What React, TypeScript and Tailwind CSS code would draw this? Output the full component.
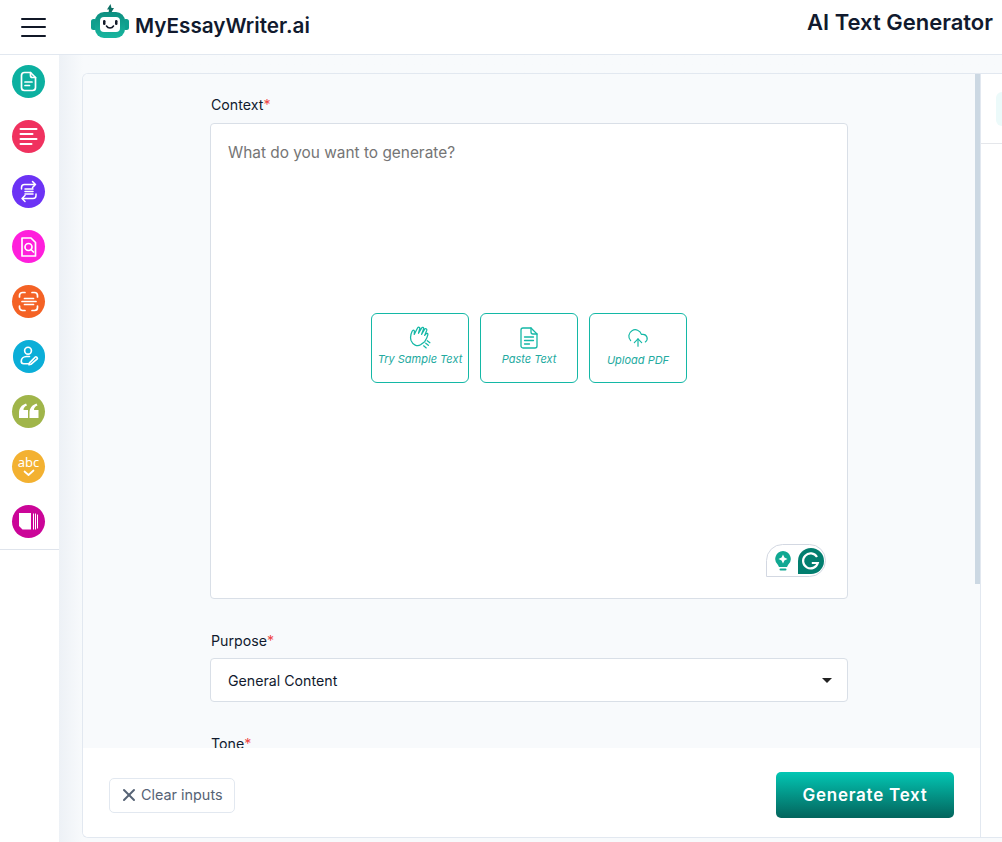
import { CloudUpload, X } from "lucide-react";

const stroke = { fill: "none", stroke: "#fff", strokeWidth: 1.7, strokeLinecap: "round" as const, strokeLinejoin: "round" as const };

function NavIcon({ bg, children, size = "w-[33px]" }: { bg: string; children: React.ReactNode; size?: string }) {
  return (
    <div className={`${bg} ${size} h-[33px] rounded-full flex items-center justify-center shrink-0`}>
      <svg width="33" height="33" viewBox="0 0 33 33">
        {children}
      </svg>
    </div>
  );
}

function Logo() {
  return (
    <svg width="38" height="34" viewBox="0 0 38 34">
      <defs>
        <linearGradient id="logoBody" x1="0" y1="0" x2="0" y2="1">
          <stop offset="0" stopColor="#0c8f80" />
          <stop offset="1" stopColor="#18b69f" />
        </linearGradient>
      </defs>
      <path d="M19.500 0l-3.500 5.500h2l-.5 3.500h2.500l3-5h-2.500z" fill="#0d6f64" />
      <rect x="0" y="15" width="6" height="11" rx="2.500" fill="#0f9f8e" />
      <rect x="32" y="15" width="6" height="11" rx="2.500" fill="#0f9f8e" />
      <rect x="4" y="8" width="30" height="26" rx="9" fill="url(#logoBody)" />
      <rect x="9" y="13" width="20" height="15" rx="4" fill="#fff" />
      <rect x="12" y="16" width="2.500" height="5" rx="1.200" fill="#111827" />
      <rect x="24" y="16" width="2.500" height="5" rx="1.200" fill="#111827" />
      <path d="M15.500 22c1.500 2.500 5.500 2.500 7 0" fill="none" stroke="#111827" strokeWidth="1.500" strokeLinecap="round" />
    </svg>
  );
}

function Action({ label, icon, textClass }: { label: string; icon: React.ReactNode; textClass: string }) {
  return (
    <button className="w-[98px] h-[70px] rounded-[6px] border border-[#14b8a6] flex flex-col items-center pt-[12px] bg-white">
      <span className="h-[23px] flex items-center">{icon}</span>
      <span className={`${textClass} text-[11px] leading-[16px] italic text-[#23aaa0] whitespace-nowrap`}>{label}</span>
    </button>
  );
}

export default function App() {
  return (
    <div className="w-[1002px] h-[842px] overflow-hidden flex flex-col bg-white font-['Inter',sans-serif] text-[#111a2e]">
      <header className="h-[55px] shrink-0 border-b border-[#e2e8f0] flex items-center bg-white">
        <div className="w-[67px] shrink-0 flex justify-center">
          <div className="w-[25px] flex flex-col gap-[6.5px]">
            <div className="h-[2px] bg-[#111827] rounded" />
            <div className="h-[2px] bg-[#111827] rounded" />
            <div className="h-[2px] bg-[#111827] rounded" />
          </div>
        </div>
        <div className="ml-[24px] flex items-center gap-[6px] mt-[-12px]">
          <Logo />
          <span className="text-[20.7px] leading-[28px] font-semibold mt-[10px]">MyEssayWriter.ai</span>
        </div>
        <h1 className="ml-auto mr-[9px] text-[22px] font-semibold mt-[-10px]">AI Text Generator</h1>
      </header>

      <div className="flex-1 flex min-h-0">
        <aside className="w-[59px] shrink-0 bg-white">
          <div className="h-[495px] border-b border-[#dfe4ec] pt-[10px] flex flex-col items-center gap-[22px] pr-[2px]">
            <NavIcon bg="bg-[#0cb0a0]">
              <path d="M9.500 10.500a3 3 0 013-3h6l5 5v10a3 3 0 01-3 3h-8a3 3 0 01-3-3z" {...stroke} />
              <path d="M18.500 7.500v3a2 2 0 002 2h3" {...stroke} />
              <path d="M13 17h7M13 20.500h4.500" {...stroke} />
            </NavIcon>
            <NavIcon bg="bg-[#f0325f]">
              <path d="M8.500 9h16M8.500 14h12M8.500 19h16M8.500 24h11" {...stroke} strokeWidth="2" />
            </NavIcon>
            <NavIcon bg="bg-[#6c33f5]">
              <path d="M9.500 14v-1.500a3 3 0 013-3H23.500M20.500 6.500l3 3-3 3M24 19v1.500a3 3 0 01-3 3H10M13 20.500l-3 3 3 3M13 14h8M13 16.500h8M13 19h8" {...stroke} strokeWidth="1.500" />
            </NavIcon>
            <NavIcon bg="bg-[#ff1fdc]">
              <path d="M10 8h9l4.500 4.500V26H10z" {...stroke} />
              <circle cx="16.500" cy="17" r="3.500" {...stroke} />
              <path d="M19 19.500l2.500 2.500" {...stroke} />
            </NavIcon>
            <NavIcon bg="bg-[#f46225]">
              <path d="M7.500 12v-1.500a3 3 0 013-3H13M20 7.500h2.500a3 3 0 013 3V12M25.500 21v1.500a3 3 0 01-3 3H20M13 25.500h-2.500a3 3 0 01-3-3V21M12.500 13.500h9M10 16.500h14M12.500 19.500h9" {...stroke} />
            </NavIcon>
            <NavIcon bg="bg-[#0baed8]" size="w-[32px]">
              <circle cx="15.500" cy="10.500" r="3.500" {...stroke} />
              <path d="M17 16.500h-3c-3 0-5.500 2-5.500 5 0 1.500 1 2.500 2.500 2.500h5" {...stroke} />
              <path d="M18.500 24.500l-2 .5.500-2 6-6c.8-.8 2.800 1 2 2z" {...stroke} />
            </NavIcon>
            <NavIcon bg="bg-[#a0b54a]">
              <path d="M7 23v-5c0-5 2.500-8 7-9.500l1 2c-2.500 1-3.500 2.500-3.500 4.500H16v8zM17.500 23v-5c0-5 2.500-8 7-9.500l1 2c-2.500 1-3.500 2.500-3.500 4.500h4.500v8z" fill="#fff" />
            </NavIcon>
            <NavIcon bg="bg-[#f3b131]">
              <text x="16.500" y="17" textAnchor="middle" fontSize="13" fill="#fff" fontFamily="'Noto Sans',sans-serif">abc</text>
              <path d="M12.500 21.500l4 3.500 5-4.500" {...stroke} />
            </NavIcon>
            <NavIcon bg="bg-[#cb0598]">
              <path d="M7 8h12v16.500h-8.500L7 21z" fill="#fff" />
              <path d="M21.500 8.500v16M23.500 8.500v16M25.500 9.500v14" fill="none" stroke="#fff" strokeWidth="1" />
            </NavIcon>
          </div>
        </aside>

        <main className="flex-1 min-w-0 bg-gradient-to-r from-[#edf1f6] to-[#f8fafc] to-[24px] pt-[18px] pl-[23px] pb-[4px]">
          <div className="h-full flex border border-[#e2e8f0] border-r-0 rounded-l-[6px] overflow-hidden bg-white">
            <section className="w-[898px] shrink-0 flex flex-col border-r border-[#e2e8f0] relative">
              <div className="absolute right-0 top-0 w-[5px] h-[510px] bg-[#ccd8e3]" />
              <div className="h-[674px] shrink-0 overflow-hidden bg-[#f8fafc] pl-[127px] pt-[22px]">
                <div className="w-[638px]">
                  <label className="block text-[14.2px] leading-[18px] mb-[9px] pl-[1px]">
                    Context<span className="text-[#ef4444]">*</span>
                  </label>
                  <div className="h-[476px] bg-white border border-[#d9dfe7] rounded-[4px] relative flex items-center justify-center gap-[11px] pb-[26px]">
                    <span className="absolute left-[17px] top-[18px] text-[#757575] text-[15.4px] leading-[22px]">What do you want to generate?</span>
                    <Action
                      label="Try Sample Text"
                      textClass="mt-[2px]"
                      icon={
                        <svg width="23" height="23" viewBox="0 0 22 22" fill="none" stroke="#14b8a6" strokeWidth="1.200" strokeLinecap="round" strokeLinejoin="round">
                          <path d="M3 5c-1.500 3-2 6-1 9 1.500 4 6 6 9 4l4-3c1-1.500 2.500-4 3-6.500.3-1.500-1-2-1.700-1L15 9l2-5c.3-1.300-1.300-2-2-1l-3 5 2-5.500c.3-1.300-1.300-1.500-2-.5L9 7l1.300-4.500c.3-1.300-1.300-1.800-2-.8L5 8 5.200 5C5 3.500 3.700 3.700 3 5z" />
                          <path d="M17.500 14l2.500 2M16 16.500l2.500 2M14 19l2.500 2" />
                        </svg>
                      }
                    />
                    <Action
                      label="Paste Text"
                      textClass="mt-[2px]"
                      icon={
                        <svg width="18" height="22" viewBox="0 0 18 22" fill="none" stroke="#14b8a6" strokeWidth="1.300" strokeLinecap="round" strokeLinejoin="round">
                          <path d="M1 3a2 2 0 012-2h8l6 6v12a2 2 0 01-2 2H3a2 2 0 01-2-2z" />
                          <path d="M11 1v4a2 2 0 002 2h4M4.500 10h9M4.500 13.500h9M4.500 17h5" />
                        </svg>
                      }
                    />
                    <Action label="Upload PDF" textClass="mt-[3px]" icon={<CloudUpload size={22} strokeWidth={1.300} className="text-[#14b8a6]" />} />
                    <div className="absolute right-[21px] bottom-[21px] w-[60px] h-[33px] border border-[#d3d8e2] rounded-[17px] rounded-bl-none flex items-center pl-[7px] gap-[6px] bg-white">
                      <svg width="18" height="22" viewBox="0 0 18 22">
                        <path d="M9 1a8 8 0 00-5 14l1 2h8l1-2A8 8 0 009 1z" fill="#10a892" />
                        <path d="M9 4.500l1.400 3.100L13.500 9l-3.100 1.400L9 13.500l-1.400-3.100L4.500 9l3.100-1.400z" fill="#fff" />
                        <rect x="5.500" y="18.500" width="7" height="2" rx="1" fill="#10a892" />
                      </svg>
                      <svg width="26" height="26" viewBox="0 0 26 26">
                        <path d="M13 0a13 13 0 0113 13 13 13 0 01-13 13H0V13A13 13 0 0113 0z" fill="#027e6f" />
                        <path d="M19 9a7.500 7.500 0 10.800 6h-6" fill="none" stroke="#fff" strokeWidth="2.200" />
                      </svg>
                    </div>
                  </div>
                  <label className="block text-[14.2px] leading-[18px] mt-[33px] mb-[8px] pl-[1px]">
                    Purpose<span className="text-[#ef4444]">*</span>
                  </label>
                  <div className="h-[44px] bg-white border border-[#d9dfe7] rounded-[4px] flex items-center justify-between pl-[17px] pr-[15px] text-[14.2px]">
                    <span className="pt-[1px]">General Content</span>
                    <span className="w-0 h-0 border-x-[5px] border-x-transparent border-t-[5px] border-t-[#222]" />
                  </div>
                  <label className="block text-[14.2px] leading-[18px] mt-[33px] pl-[1px]">
                    Tone<span className="text-[#ef4444]">*</span>
                  </label>
                </div>
              </div>
              <div className="flex-1 flex items-center justify-between pl-[26px] pr-[26px] bg-white">
                <button className="h-[35px] w-[126px] mt-[5px] pl-[9px] rounded-[5px] border border-[#e2e8f0] flex items-center gap-[2px] text-[14.4px] text-[#566375]">
                  <X size={20} strokeWidth={2.400} />
                  Clear inputs
                </button>
                <button className="h-[46px] w-[178px] mt-[5px] pt-[1px] rounded-[5px] bg-gradient-to-b from-[#02c7b4] to-[#03655d] text-white text-[17px] font-semibold tracking-[0.75px]">
                  Generate Text
                </button>
              </div>
            </section>
            <section className="flex-1 min-w-0 bg-white pt-[18px]">
              <div className="h-[34px] ml-[15px] rounded-l-[6px] bg-[#ecfafa]" />
              <div className="mt-[17px] border-t border-[#e5e7eb]" />
            </section>
          </div>
        </main>
      </div>
    </div>
  );
}
